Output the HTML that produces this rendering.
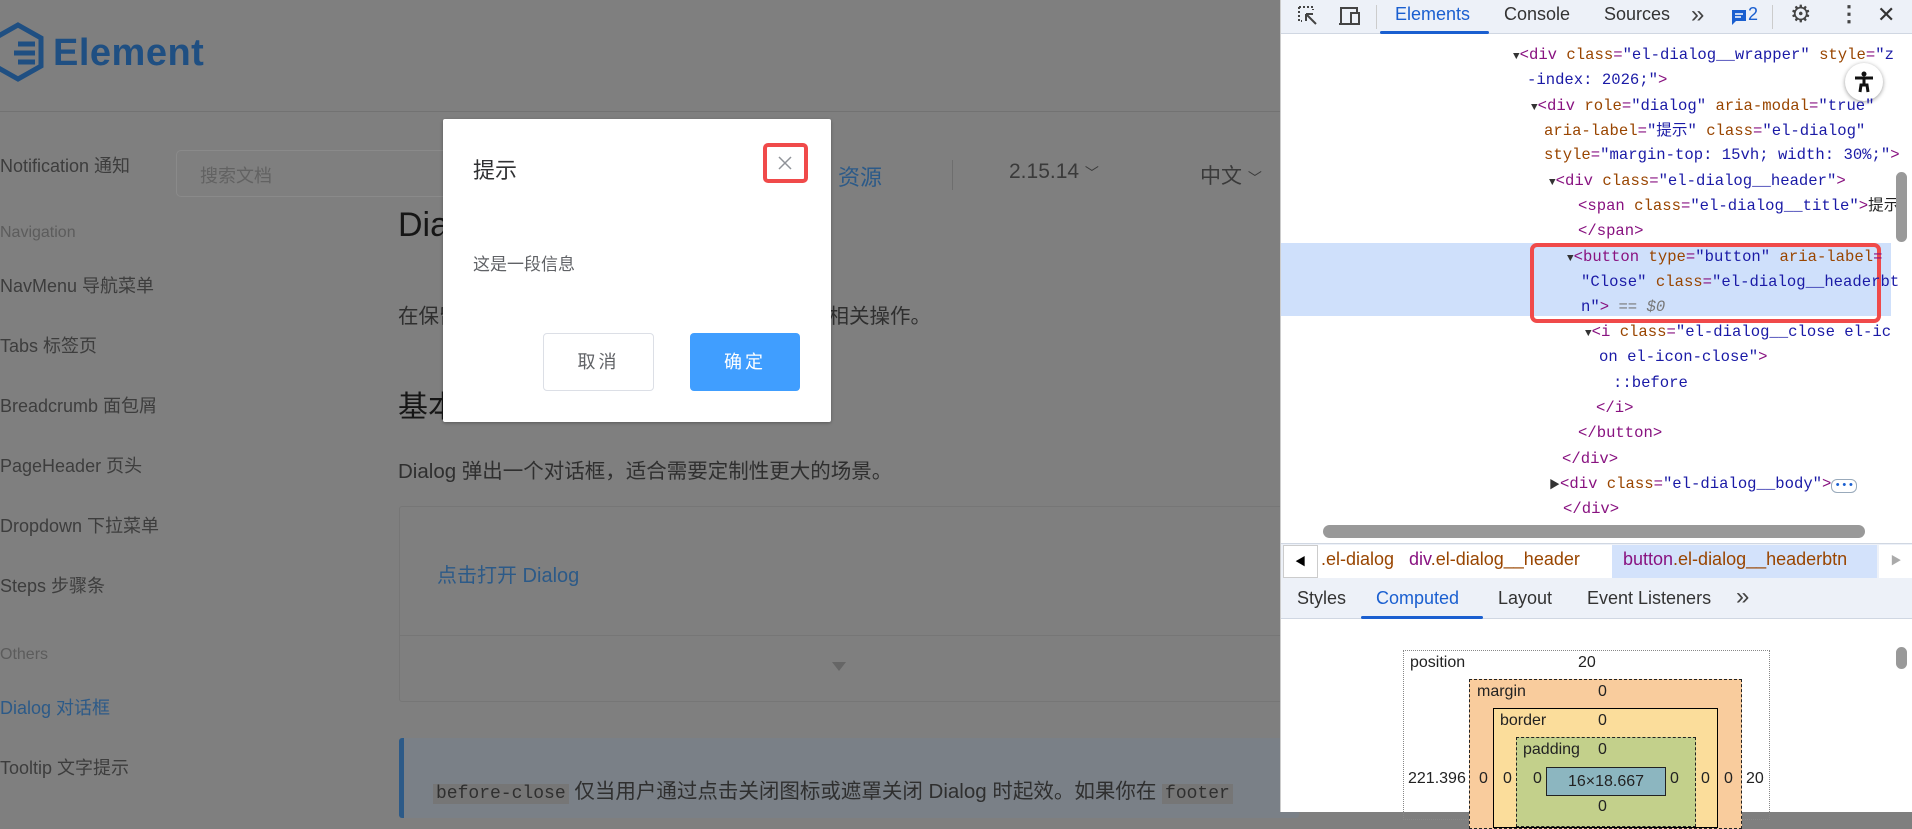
<!DOCTYPE html>
<html><head><meta charset="utf-8"><style>
*{margin:0;padding:0;box-sizing:border-box}
body{width:1912px;height:812px;overflow:hidden;position:relative;background:#7f7f7f;font-family:"Liberation Sans","Noto Sans CJK SC",sans-serif}
.a{position:absolute;white-space:nowrap}
.nav{font-size:18px;color:#3d3d3d}
.grp{font-size:16px;color:#5c5c5c}
#dt{position:absolute;left:1280px;top:0;width:632px;height:812px;background:#fff;border-left:1px solid #ccc}
.mono{font-family:"Liberation Mono","Noto Sans CJK SC",monospace;font-size:15.6px;color:#881280}
.mono .a{line-height:20px;height:20px}
.an{color:#994500}.av{color:#1a1aa6}
.tri{font-size:11px;color:#333}
.bt{font-size:20.5px;color:#2f2f2f}
</style></head><body>
<!-- page -->
<svg class="a" style="left:0;top:22px" width="44" height="60" viewBox="0 0 44 60"><path d="M18 3 L41 16 L41 44 L18 57 L-5 44 L-5 16 Z" fill="none" stroke="#1f4f82" stroke-width="5"/><path d="M18 22 L35 22 M14 31 L35 31 M18 40 L35 40" stroke="#1f4f82" stroke-width="5"/></svg>
<div class="a" style="left:53px;top:32px;font-size:38px;color:#1f4f82;font-weight:bold;letter-spacing:0.5px">Element</div>
<div class="a" style="left:0;top:111px;width:1280px;height:1px;background:#727272"></div>
<div class="a nav" style="left:0;top:152px">Notification 通知</div>
<div class="a" style="left:176px;top:150px;width:300px;height:47px;border:1px solid #8a8a8a;border-radius:5px"></div>
<div class="a" style="left:200px;top:162px;font-size:18px;color:#626262">搜索文档</div>
<div class="a" style="left:838px;top:160px;font-size:22px;color:#2c5a88">资源</div>
<div class="a" style="left:952px;top:160px;width:1px;height:30px;background:#6e6e6e"></div>
<div class="a" style="left:1009px;top:160px;font-size:21px;color:#3a3a3a">2.15.14 <span style="font-size:14px">﹀</span></div>
<div class="a" style="left:1200px;top:160px;font-size:21px;color:#3a3a3a">中文 <span style="font-size:14px">﹀</span></div>
<div class="a grp" style="left:0;top:224px">Navigation</div>
<div class="a nav" style="left:0;top:272px">NavMenu 导航菜单</div>
<div class="a nav" style="left:0;top:332px">Tabs 标签页</div>
<div class="a nav" style="left:0;top:392px">Breadcrumb 面包屑</div>
<div class="a nav" style="left:0;top:452px">PageHeader 页头</div>
<div class="a nav" style="left:0;top:512px">Dropdown 下拉菜单</div>
<div class="a nav" style="left:0;top:572px">Steps 步骤条</div>
<div class="a grp" style="left:0;top:646px">Others</div>
<div class="a nav" style="left:0;top:694px;color:#2c5a88">Dialog 对话框</div>
<div class="a nav" style="left:0;top:754px">Tooltip 文字提示</div>
<div class="a" style="left:398px;top:197px;font-size:34px;color:#161616">Dialog 对话框</div>
<div class="a bt" style="left:398px;top:299px">在保留当前页面状态的情况下，告知用户并承载相关操作。</div>
<div class="a" style="left:398px;top:382px;font-size:30px;color:#161616">基本用法</div>
<div class="a bt" style="left:398px;top:454px">Dialog 弹出一个对话框，适合需要定制性更大的场景。</div>
<div class="a" style="left:399px;top:506px;width:900px;height:196px;border:1px solid #767676;border-radius:3px"></div>
<div class="a" style="left:399px;top:635px;width:900px;height:1px;background:#767676"></div>
<div class="a" style="left:437px;top:559px;font-size:20px;color:#2c5a88">点击打开 Dialog</div>
<div class="a" style="left:832px;top:662px;width:0;height:0;border-left:7px solid transparent;border-right:7px solid transparent;border-top:9px solid #666"></div>
<div class="a" style="left:399px;top:738px;width:900px;height:80px;background:#7a8087;border-left:5px solid #2c5a88;border-radius:3px"></div>
<div class="a bt" style="left:433px;top:774px"><span style="font-family:'Liberation Mono',monospace;font-size:18px;background:#767676;padding:0 3px">before-close</span> 仅当用户通过点击关闭图标或遮罩关闭 Dialog 时起效。如果你在 <span style="font-family:'Liberation Mono',monospace;font-size:18px;background:#767676;padding:0 3px">footer</span></div>
<!-- dialog -->
<div class="a" style="left:443px;top:119px;width:388px;height:303px;background:#fff;box-shadow:0 1px 3px rgba(0,0,0,.3);border-radius:2px"></div>
<div class="a" style="left:473px;top:153px;font-size:22px;color:#303133">提示</div>
<div class="a" style="left:763px;top:143px;width:45px;height:40px;border:4px solid #f04a4a;border-radius:5px"></div>
<svg class="a" style="left:777px;top:155px" width="16" height="16" viewBox="0 0 16 16"><path d="M2 2L14 14M14 2L2 14" stroke="#909399" stroke-width="1.5"/></svg>
<div class="a" style="left:473px;top:250px;font-size:17px;color:#606266">这是一段信息</div>
<div class="a" style="left:543px;top:333px;width:111px;height:58px;border:1px solid #dcdfe6;border-radius:4px;font-size:18px;color:#606266;text-align:center;line-height:56px;letter-spacing:3px">取消</div>
<div class="a" style="left:690px;top:333px;width:110px;height:58px;background:#409eff;border-radius:4px;font-size:18px;color:#fff;text-align:center;line-height:58px;letter-spacing:3px">确定</div>
<!-- devtools -->
<div id="dt">
<div class="a" style="left:0;top:0;width:632px;height:34px;background:#edf1f8;border-bottom:1px solid #d0d7e2"></div>
<svg class="a" style="left:15px;top:4px" width="24" height="24" viewBox="0 0 24 24"><path d="M3 3h14v3M3 3v14h3" stroke="#444" stroke-width="2" fill="none" stroke-dasharray="2 2"/><path d="M10 10l10 10M10 10h7M10 10v7" stroke="#444" stroke-width="2" fill="none"/></svg>
<svg class="a" style="left:55px;top:4px" width="26" height="24" viewBox="0 0 26 24"><path d="M3 20h12M5 20V4h16v4" stroke="#444" stroke-width="2" fill="none"/><rect x="15" y="9" width="8" height="11" stroke="#444" stroke-width="2" fill="none"/></svg>
<div class="a" style="left:95px;top:5px;width:1px;height:24px;background:#ccc"></div>
<div class="a" style="left:114px;top:4px;font-size:18px;color:#1a5fd0">Elements</div>
<div class="a" style="left:99px;top:31px;width:109px;height:3px;background:#1a5fd0;border-radius:2px"></div>
<div class="a" style="left:223px;top:4px;font-size:18px;color:#333">Console</div>
<div class="a" style="left:323px;top:4px;font-size:18px;color:#333">Sources</div>
<div class="a" style="left:410px;top:1px;font-size:24px;color:#444">»</div>
<svg class="a" style="left:450px;top:9px" width="16" height="17" viewBox="0 0 16 17"><path d="M1 1h14v11H5l-4 4z" fill="#1a5fd0"/><path d="M4 5h8M4 8h6" stroke="#fff" stroke-width="1.5"/></svg>
<div class="a" style="left:467px;top:4px;font-size:18px;color:#1a5fd0">2</div>
<div class="a" style="left:491px;top:5px;width:1px;height:24px;background:#ccc"></div>
<div class="a" style="left:509px;top:0px;font-size:24px;color:#444">⚙</div>
<div class="a" style="left:557px;top:1px;font-size:22px;color:#444;font-weight:bold">⋮</div>
<div class="a" style="left:596px;top:2px;font-size:22px;color:#333">✕</div>
<div class="a" style="left:0;top:243px;width:610px;height:73px;background:#cfe0fb"></div>
<div class="a" style="left:249px;top:243px;width:351px;height:80px;border:4px solid #f04a4a;border-radius:7px"></div>
<div class="a" style="left:564px;top:63px;width:38px;height:38px;border-radius:50%;background:#fff;box-shadow:0 1px 4px rgba(0,0,0,.4)"></div>
<svg class="a" style="left:571px;top:70px" width="24" height="24" viewBox="0 0 24 24"><circle cx="12" cy="4" r="2.5" fill="#111"/><path d="M3 8h18M12 8v7M8 22l1-7h6l1 7" stroke="#111" stroke-width="3" fill="none"/></svg>
<div class="mono">
<div class="a" style="left:232px;top:45px"><span class="tri">▼</span>&lt;div <span class="an">class</span>=<span class="av">"el-dialog__wrapper"</span> <span class="an">style</span>=<span class="av">"z</span></div>
<div class="a" style="left:246px;top:70px"><span class="av">-index: 2026;"</span>&gt;</div>
<div class="a" style="left:250px;top:96px"><span class="tri">▼</span>&lt;div <span class="an">role</span>=<span class="av">"dialog"</span> <span class="an">aria-modal</span>=<span class="av">"true"</span></div>
<div class="a" style="left:263px;top:121px"><span class="an">aria-label</span>=<span class="av">"提示"</span> <span class="an">class</span>=<span class="av">"el-dialog"</span></div>
<div class="a" style="left:263px;top:145px"><span class="an">style</span>=<span class="av">"margin-top: 15vh; width: 30%;"</span>&gt;</div>
<div class="a" style="left:268px;top:171px"><span class="tri">▼</span>&lt;div <span class="an">class</span>=<span class="av">"el-dialog__header"</span>&gt;</div>
<div class="a" style="left:297px;top:196px">&lt;span <span class="an">class</span>=<span class="av">"el-dialog__title"</span>&gt;<span style="color:#222">提示</span></div>
<div class="a" style="left:297px;top:221px">&lt;/span&gt;</div>
<div class="a" style="left:286px;top:247px"><span class="tri">▼</span>&lt;button <span class="an">type</span>=<span class="av">"button"</span> <span class="an">aria-label</span>=</div>
<div class="a" style="left:300px;top:272px"><span class="av">"Close"</span> <span class="an">class</span>=<span class="av">"el-dialog__headerbt</span></div>
<div class="a" style="left:300px;top:297px"><span class="av">n"</span>&gt; <i style="color:#777">== $0</i></div>
<div class="a" style="left:304px;top:322px"><span class="tri">▼</span>&lt;i <span class="an">class</span>=<span class="av">"el-dialog__close el-ic</span></div>
<div class="a" style="left:318px;top:347px"><span class="av">on el-icon-close"</span>&gt;</div>
<div class="a" style="left:332px;top:373px;color:#1a1aa6">::before</div>
<div class="a" style="left:315px;top:398px">&lt;/i&gt;</div>
<div class="a" style="left:297px;top:423px">&lt;/button&gt;</div>
<div class="a" style="left:281px;top:449px">&lt;/div&gt;</div>
<div class="a" style="left:268px;top:474px"><span class="tri">▶</span>&lt;div <span class="an">class</span>=<span class="av">"el-dialog__body"</span>&gt;<span style="font-size:11px;color:#1a5fd0;border:1px solid #9ab;border-radius:6px;padding:0 2px">•••</span></div>
<div class="a" style="left:282px;top:499px">&lt;/div&gt;</div>
</div>
<div class="a" style="left:615px;top:172px;width:11px;height:70px;background:#999;border-radius:6px"></div>
<div class="a" style="left:42px;top:525px;width:542px;height:13px;background:#999;border-radius:7px"></div>
<div class="a" style="left:0;top:543px;width:632px;height:36px;background:#edf1f8;border-top:1px solid #d0d7e2"></div>
<div class="a" style="left:2px;top:545px;width:35px;height:33px;background:#fff;border:1px solid #ccc;font-size:11px;text-align:center;line-height:33px">◀</div>
<div class="a" style="left:37px;top:545px;width:294px;height:33px;background:#fff"></div>
<div class="a" style="left:40px;top:549px;font-size:18px;color:#881280"><span style="color:#994500">.el-dialog</span>&nbsp;&nbsp;&nbsp;div<span style="color:#994500">.el-dialog__header</span></div>
<div class="a" style="left:331px;top:545px;width:265px;height:33px;background:#d3e2fb"></div>
<div class="a" style="left:342px;top:549px;font-size:18px;color:#881280">button<span style="color:#994500">.el-dialog__headerbtn</span></div>
<div class="a" style="left:598px;top:545px;width:34px;height:33px;background:#fff;font-size:11px;color:#aaa;text-align:center;line-height:33px">▶</div>
<div class="a" style="left:0;top:579px;width:632px;height:40px;background:#edf1f8;border-bottom:1px solid #d0d7e2"></div>
<div class="a" style="left:16px;top:588px;font-size:18px;color:#333">Styles</div>
<div class="a" style="left:95px;top:588px;font-size:18px;color:#1a5fd0">Computed</div>
<div class="a" style="left:80px;top:616px;width:122px;height:3px;background:#1a5fd0;border-radius:2px"></div>
<div class="a" style="left:217px;top:588px;font-size:18px;color:#333">Layout</div>
<div class="a" style="left:306px;top:588px;font-size:18px;color:#333">Event Listeners</div>
<div class="a" style="left:455px;top:583px;font-size:24px;color:#444">»</div>
<div class="a" style="left:615px;top:647px;width:11px;height:22px;background:#999;border-radius:6px"></div>
<div class="a" style="left:122px;top:650px;width:367px;height:170px;border:1px dotted #888"></div>
<div class="a" style="left:129px;top:654px;font-size:16px;color:#222">position</div>
<div class="a" style="left:297px;top:654px;font-size:16px;color:#222">20</div>
<div class="a" style="left:188px;top:679px;width:273px;height:150px;background:#f9cc9d;border:1px dashed #222"></div>
<div class="a" style="left:196px;top:683px;font-size:16px;color:#222">margin</div>
<div class="a" style="left:317px;top:683px;font-size:16px;color:#222">0</div>
<div class="a" style="left:212px;top:708px;width:225px;height:120px;background:#fbdd9b;border:1px solid #000"></div>
<div class="a" style="left:219px;top:712px;font-size:16px;color:#222">border</div>
<div class="a" style="left:317px;top:712px;font-size:16px;color:#222">0</div>
<div class="a" style="left:235px;top:737px;width:180px;height:90px;background:#c3d08b;border:1px dashed #222"></div>
<div class="a" style="left:242px;top:741px;font-size:16px;color:#222">padding</div>
<div class="a" style="left:317px;top:741px;font-size:16px;color:#222">0</div>
<div class="a" style="left:265px;top:767px;width:120px;height:29px;background:#8cb6c0;border:1px solid #222;text-align:center;font-size:16px;line-height:27px;color:#222">16×18.667</div>
<div class="a" style="left:127px;top:770px;font-size:16px;color:#222">221.396</div>
<div class="a" style="left:198px;top:770px;font-size:16px;color:#222">0</div>
<div class="a" style="left:222px;top:770px;font-size:16px;color:#222">0</div>
<div class="a" style="left:252px;top:770px;font-size:16px;color:#222">0</div>
<div class="a" style="left:389px;top:770px;font-size:16px;color:#222">0</div>
<div class="a" style="left:420px;top:770px;font-size:16px;color:#222">0</div>
<div class="a" style="left:443px;top:770px;font-size:16px;color:#222">0</div>
<div class="a" style="left:465px;top:770px;font-size:16px;color:#222">20</div>
<div class="a" style="left:317px;top:798px;font-size:16px;color:#222">0</div>
</div>
</body></html>
